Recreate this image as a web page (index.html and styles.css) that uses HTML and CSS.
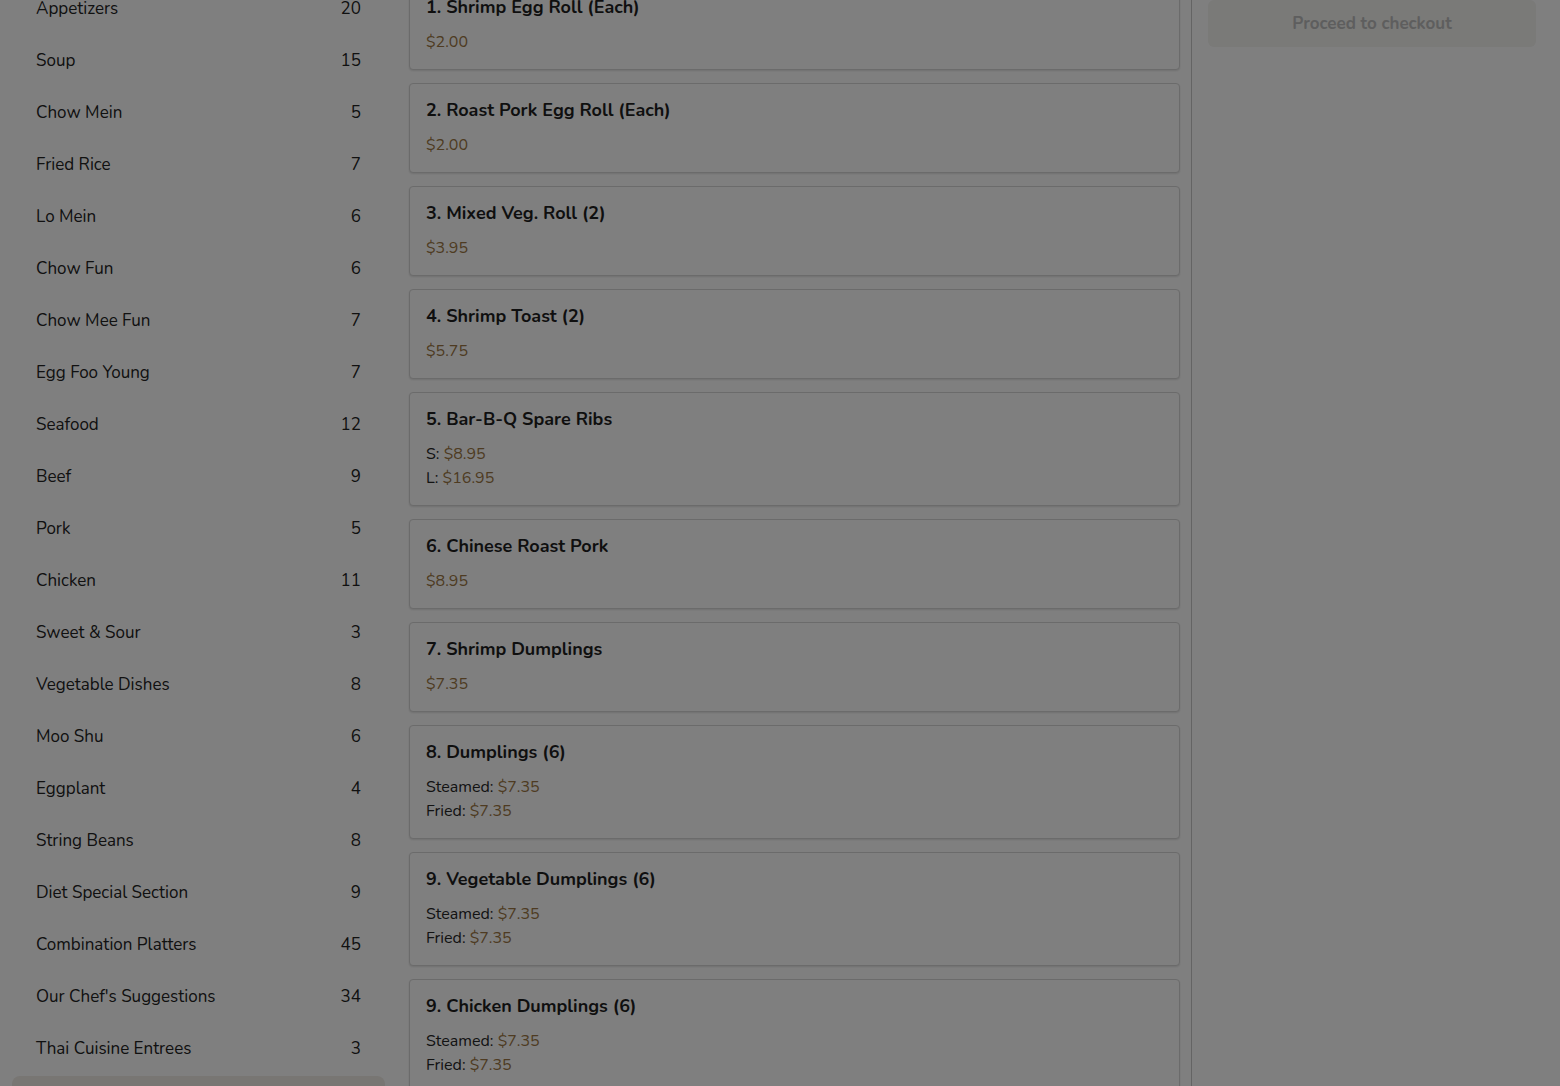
FILE: index.html
```html
<!DOCTYPE html>
<html lang="en">
<head>
<meta charset="utf-8">
<title>Menu</title>
<link rel="stylesheet" href="styles.css">
</head>
<body>
<div class="page">
  <aside class="sidebar">
    <ul class="cat-list">
      <li class="cat"><span>Appetizers</span><span>20</span></li>
      <li class="cat"><span>Soup</span><span>15</span></li>
      <li class="cat"><span>Chow Mein</span><span>5</span></li>
      <li class="cat"><span>Fried Rice</span><span>7</span></li>
      <li class="cat"><span>Lo Mein</span><span>6</span></li>
      <li class="cat"><span>Chow Fun</span><span>6</span></li>
      <li class="cat"><span>Chow Mee Fun</span><span>7</span></li>
      <li class="cat"><span>Egg Foo Young</span><span>7</span></li>
      <li class="cat"><span>Seafood</span><span>12</span></li>
      <li class="cat"><span>Beef</span><span>9</span></li>
      <li class="cat"><span>Pork</span><span>5</span></li>
      <li class="cat"><span>Chicken</span><span>11</span></li>
      <li class="cat"><span>Sweet &amp; Sour</span><span>3</span></li>
      <li class="cat"><span>Vegetable Dishes</span><span>8</span></li>
      <li class="cat"><span>Moo Shu</span><span>6</span></li>
      <li class="cat"><span>Eggplant</span><span>4</span></li>
      <li class="cat"><span>String Beans</span><span>8</span></li>
      <li class="cat"><span>Diet Special Section</span><span>9</span></li>
      <li class="cat"><span>Combination Platters</span><span>45</span></li>
      <li class="cat"><span>Our Chef's Suggestions</span><span>34</span></li>
      <li class="cat"><span>Thai Cuisine Entrees</span><span>3</span></li>
      <li class="cat cat-active"><span></span><span></span></li>
    </ul>
  </aside>
  <main class="menu">
    <div class="item"><h3 class="item-title">1. Shrimp Egg Roll (Each)</h3><div class="prices"><div class="price-line"><span class="price">$2.00</span></div></div></div>
    <div class="item"><h3 class="item-title">2. Roast Pork Egg Roll (Each)</h3><div class="prices"><div class="price-line"><span class="price">$2.00</span></div></div></div>
    <div class="item"><h3 class="item-title">3. Mixed Veg. Roll (2)</h3><div class="prices"><div class="price-line"><span class="price">$3.95</span></div></div></div>
    <div class="item"><h3 class="item-title">4. Shrimp Toast (2)</h3><div class="prices"><div class="price-line"><span class="price">$5.75</span></div></div></div>
    <div class="item"><h3 class="item-title">5. Bar-B-Q Spare Ribs</h3><div class="prices"><div class="price-line">S: <span class="price">$8.95</span></div><div class="price-line">L: <span class="price">$16.95</span></div></div></div>
    <div class="item"><h3 class="item-title">6. Chinese Roast Pork</h3><div class="prices"><div class="price-line"><span class="price">$8.95</span></div></div></div>
    <div class="item"><h3 class="item-title">7. Shrimp Dumplings</h3><div class="prices"><div class="price-line"><span class="price">$7.35</span></div></div></div>
    <div class="item"><h3 class="item-title">8. Dumplings (6)</h3><div class="prices"><div class="price-line">Steamed: <span class="price">$7.35</span></div><div class="price-line">Fried: <span class="price">$7.35</span></div></div></div>
    <div class="item"><h3 class="item-title">9. Vegetable Dumplings (6)</h3><div class="prices"><div class="price-line">Steamed: <span class="price">$7.35</span></div><div class="price-line">Fried: <span class="price">$7.35</span></div></div></div>
    <div class="item"><h3 class="item-title">9. Chicken Dumplings (6)</h3><div class="prices"><div class="price-line">Steamed: <span class="price">$7.35</span></div><div class="price-line">Fried: <span class="price">$7.35</span></div></div></div>
  </main>
  <aside class="cart">
    <button class="checkout" type="button">Proceed to checkout</button>
  </aside>
</div>
<div class="overlay"></div>
</body>
</html>
```

FILE: styles.css
```css
html, body {
  margin: 0;
  height: 1086px;
  overflow: hidden;
  background: #ffffff;
}
body {
  font-family: "Nunito", "Lato", "Noto Sans", sans-serif;
  color: #262626;
}
.page {
  display: grid;
  grid-template-columns: 397px 794px 1fr;
  margin-top: -20px;
}
.sidebar {
  padding-top: 2px;
}
.cat-list {
  list-style: none;
  margin: 0;
  padding: 0;
}
.cat {
  display: flex;
  justify-content: space-between;
  align-items: center;
  height: 52px;
  margin: 0 12px;
  padding: 0 24px;
  font-size: 17px;
  color: #222222;
}
.cat-active {
  margin-top: 2px;
  background: #f0ece6;
  border-radius: 8px;
}
.menu {
  display: flex;
  flex-direction: column;
  gap: 13px;
  padding: 0 11px 0 12px;
}
.item {
  border: 1px solid #d6d6d6;
  border-radius: 4px;
  box-shadow: 0 1px 2px rgba(0,0,0,0.12);
  padding: 14px 16px 15px 16px;
  background: #fff;
}
.item-title {
  margin: 0;
  font-size: 18px;
  font-weight: 700;
  line-height: 24px;
  color: #1f1f1f;
}
.prices {
  margin-top: 11px;
}
.price-line {
  font-size: 16px;
  line-height: 24px;
  color: #262626;
}
.price {
  color: #9c7744;
}
.cart {
  border-left: 1px solid #c8c8c8;
  padding: 20px 24px 0 16px;
}
.checkout {
  display: block;
  width: 100%;
  height: 47px;
  border: none;
  border-radius: 6px;
  background: #f4f4f1;
  color: #bdbdbd;
  font-family: inherit;
  font-size: 17px;
  font-weight: 700;
}
.overlay {
  position: fixed;
  inset: 0;
  background: rgba(0,0,0,0.5);
}
```
